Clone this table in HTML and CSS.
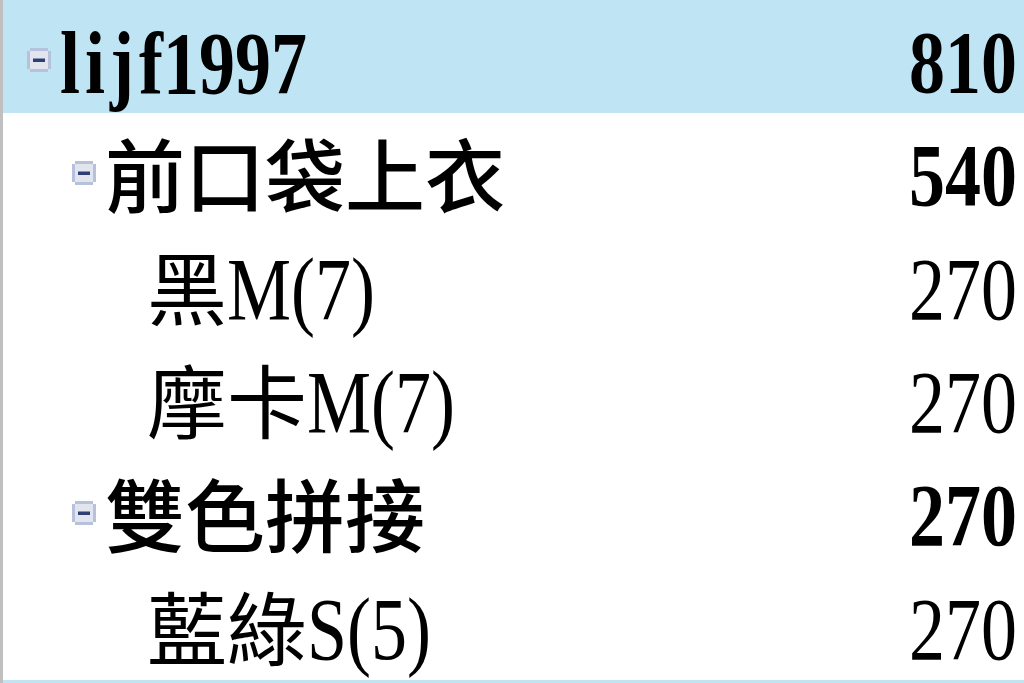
FILE: index.html
```html
<!DOCTYPE html>
<html lang="zh-Hant">
<head>
<meta charset="utf-8">
<title>Pivot</title>
<link rel="stylesheet" href="styles.css">
</head>
<body>
<div class="table">
  <div class="row sel lvl0">
    <span class="tog"><svg viewBox="0 0 24 24" width="24" height="24"><path d="M3 0H21V3H24V21H21V24H3V21H0V3H3Z" fill="#b6c2dc"/><rect x="3" y="3" width="18" height="18" fill="#e2e5ee"/><rect x="6" y="10.5" width="12" height="3.5" fill="#2d3f73"/></svg></span>
    <div class="label bold"><span class="lat wide">lij</span><span class="lat">f1997</span></div>
    <div class="num bold">810</div>
  </div>
  <div class="row lvl1">
    <span class="tog"><svg viewBox="0 0 24 24" width="24" height="24"><path d="M3 0H21V3H24V21H21V24H3V21H0V3H3Z" fill="#b6c2dc"/><rect x="3" y="3" width="18" height="18" fill="#e2e5ee"/><rect x="6" y="10.5" width="12" height="3.5" fill="#2d3f73"/></svg></span>
    <div class="label bold">前口袋上衣</div>
    <div class="num bold">540</div>
  </div>
  <div class="row lvl2">
    <div class="label">黑<span class="lat">M(7)</span></div>
    <div class="num">270</div>
  </div>
  <div class="row lvl2">
    <div class="label">摩卡<span class="lat">M(7)</span></div>
    <div class="num">270</div>
  </div>
  <div class="row lvl1">
    <span class="tog"><svg viewBox="0 0 24 24" width="24" height="24"><path d="M3 0H21V3H24V21H21V24H3V21H0V3H3Z" fill="#b6c2dc"/><rect x="3" y="3" width="18" height="18" fill="#e2e5ee"/><rect x="6" y="10.5" width="12" height="3.5" fill="#2d3f73"/></svg></span>
    <div class="label bold">雙色拼接</div>
    <div class="num bold">270</div>
  </div>
  <div class="row lvl2">
    <div class="label">藍綠<span class="lat">S(5)</span></div>
    <div class="num">270</div>
  </div>
  <div class="row sel tail"></div>
</div>
</body>
</html>
```

FILE: styles.css
```css
html, body {
  margin: 0;
  padding: 0;
  background: #ffffff;
}
body {
  width: 1024px;
  height: 683px;
  overflow: hidden;
  font-family: "Liberation Serif", "Noto Sans CJK TC", serif;
  color: #000;
}
.table {
  border-left: 3px solid #c0c0c0;
  height: 683px;
  box-sizing: border-box;
  display: flex;
  flex-direction: column;
  overflow: hidden;
}
.row {
  height: 113.33px;
  flex: 0 0 113.33px;
  display: flex;
  align-items: flex-start;
  box-sizing: border-box;
  overflow: hidden;
}
.row.sel {
  background: #bfe5f5;
}
.row.tail {
  height: auto;
  flex: 1 1 0;
}
.lvl0 { padding-left: 24px; }
.lvl1 { padding-left: 69px; }
.lvl2 { padding-left: 144px; }
.tog {
  width: 24px;
  height: 24px;
  margin-top: 48px;
  margin-right: 9px;
  flex: 0 0 24px;
}
.tog svg { display: block; }
.label {
  flex: 1;
  font-size: 80px;
  line-height: 80px;
  padding-top: 25.5px;
  white-space: nowrap;
}
.label.bold {
  font-weight: 500;
}
.lat {
  display: inline-block;
  font-size: 72px;
  line-height: 72px;
  transform: scaleY(1.23);
  transform-origin: 50% 60.3px;
}
.label.bold .lat { font-weight: bold; }
.wide { letter-spacing: 5px; }
.num {
  font-size: 72px;
  line-height: 72px;
  padding-top: 32.2px;
  padding-right: 7px;
  text-align: right;
  transform: scaleY(1.23);
  transform-origin: 100% 92.5px;
  white-space: nowrap;
}
.num.bold { font-weight: bold; }
```
